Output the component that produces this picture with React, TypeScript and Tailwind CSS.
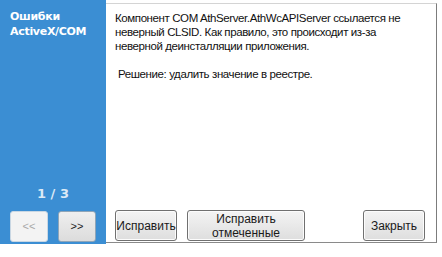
import React from 'react';

const btn =
  'rounded-[3px] border border-[#707070] bg-gradient-to-b from-[#f4f4f4] to-[#dedede] text-[12px] leading-[14px] text-[#1a1a1a] shadow-[inset_0_0_0_1px_#fcfcfc]';

const App: React.FC = () => {
  return (
    <div className="w-[442px] h-[257px] bg-white flex items-start overflow-hidden font-['Liberation_Sans',Tahoma,sans-serif]">
      {/* Sidebar */}
      <div className="w-[106px] h-[244px] bg-[#3b8ed3] flex flex-col px-[10px] pt-[9px] pb-[2px]">
        <div className="text-white font-bold text-[11px] leading-[15px] font-['DejaVu_Sans',sans-serif] tracking-[-0.3px]">
          Ошибки
          <br />
          ActiveX/COM
        </div>
        <div className="mt-auto text-center text-[#dbe9f6] font-bold text-[13px] leading-[16px] mb-[9px] font-['DejaVu_Sans',sans-serif]">
          1 / 3
        </div>
        <div className="flex gap-[10px]">
          <button className="w-[38px] h-[31px] rounded-[3px] border border-[#c9d7e3] bg-[#f3f3f3] text-[11px] text-[#a8a8a8]">
            &lt;&lt;
          </button>
          <button className="w-[38px] h-[31px] rounded-[3px] border border-[#8fa5b8] bg-gradient-to-b from-[#efefef] to-[#dcdcdc] text-[11px] text-[#222]">
            &gt;&gt;
          </button>
        </div>
      </div>

      {/* Content */}
      <div className="w-[331px] h-[240px] mt-[3px] border-t border-r border-b border-t-[#d4d4d4] border-r-[#7c7c7c] border-b-[#8a8a8a] flex flex-col pl-[9px] pr-[11px] pt-[7px]">
        <p className="text-[11.5px] leading-[14px] text-[#111] whitespace-nowrap tracking-[-0.4px]">
          Компонент COM AthServer.AthWcAPIServer ссылается не
          <br />
          неверный CLSID. Как правило, это происходит из-за
          <br />
          неверной деинсталляции приложения.
        </p>
        <p className="mt-[14px] pl-[3px] text-[11.5px] leading-[14px] text-[#111] tracking-[-0.4px]">
          Решение: удалить значение в реестре.
        </p>
        <div className="mt-auto mb-[1px] flex items-center">
          <button className={`${btn} w-[62px] h-[31px]`}>Исправить</button>
          <button className={`${btn} ml-[10px] w-[118px] h-[31px]`}>
            Исправить
            <br />
            отмеченные
          </button>
          <button className={`${btn} ml-auto w-[62px] h-[31px]`}>Закрыть</button>
        </div>
      </div>
    </div>
  );
};

export default App;
